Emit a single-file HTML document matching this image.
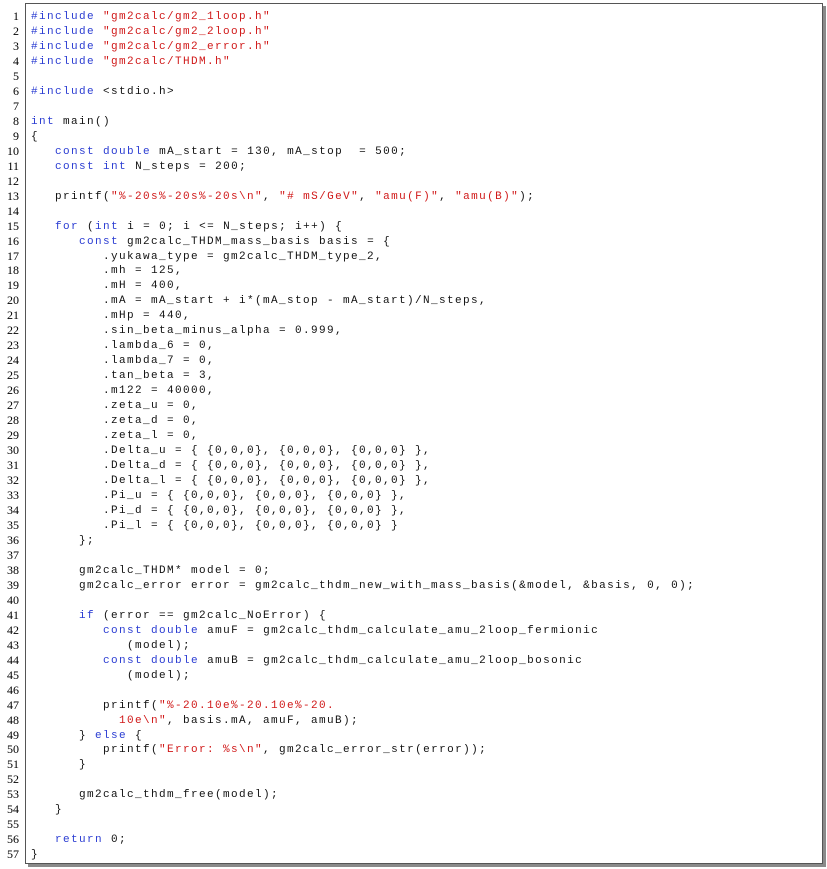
<!DOCTYPE html>
<html><head><meta charset="utf-8"><style>
html,body{margin:0;padding:0;background:#fff;width:827px;height:869px;overflow:hidden}
.box{position:absolute;left:25px;top:3px;width:796px;height:859px;border:1px solid #555;background:#fff;box-shadow:3px 3px 0 #8a8a8a}
.nums{position:absolute;left:0;top:9px;width:19px;text-align:right;font-family:"Liberation Serif",serif;font-size:12px;color:#000}
.nums div,.code div{height:14.97px;line-height:14.97px}
.code{position:absolute;left:31px;top:10px;font-family:"Liberation Mono",monospace;font-size:11px;letter-spacing:1.4px;color:#111}
.code div{white-space:pre}
.k{color:#2a3cd2}.s{color:#d01818}
</style></head><body>
<div class="box"></div>
<div class="nums">
<div>1</div><div>2</div><div>3</div><div>4</div><div>5</div><div>6</div><div>7</div><div>8</div><div>9</div><div>10</div><div>11</div><div>12</div><div>13</div><div>14</div><div>15</div><div>16</div><div>17</div><div>18</div><div>19</div><div>20</div><div>21</div><div>22</div><div>23</div><div>24</div><div>25</div><div>26</div><div>27</div><div>28</div><div>29</div><div>30</div><div>31</div><div>32</div><div>33</div><div>34</div><div>35</div><div>36</div><div>37</div><div>38</div><div>39</div><div>40</div><div>41</div><div>42</div><div>43</div><div>44</div><div>45</div><div>46</div><div>47</div><div>48</div><div>49</div><div>50</div><div>51</div><div>52</div><div>53</div><div>54</div><div>55</div><div>56</div><div>57</div>
</div>
<div class="code">
<div><span class="k">#include</span> <span class="s">"gm2calc/gm2_1loop.h"</span></div>
<div><span class="k">#include</span> <span class="s">"gm2calc/gm2_2loop.h"</span></div>
<div><span class="k">#include</span> <span class="s">"gm2calc/gm2_error.h"</span></div>
<div><span class="k">#include</span> <span class="s">"gm2calc/THDM.h"</span></div>
<div> </div>
<div><span class="k">#include</span> &lt;stdio.h&gt;</div>
<div> </div>
<div><span class="k">int</span> main()</div>
<div>{</div>
<div>   <span class="k">const</span> <span class="k">double</span> mA_start = 130, mA_stop  = 500;</div>
<div>   <span class="k">const</span> <span class="k">int</span> N_steps = 200;</div>
<div> </div>
<div>   printf(<span class="s">"%-20s%-20s%-20s\n"</span>, <span class="s">"# mS/GeV"</span>, <span class="s">"amu(F)"</span>, <span class="s">"amu(B)"</span>);</div>
<div> </div>
<div>   <span class="k">for</span> (<span class="k">int</span> i = 0; i &lt;= N_steps; i++) {</div>
<div>      <span class="k">const</span> gm2calc_THDM_mass_basis basis = {</div>
<div>         .yukawa_type = gm2calc_THDM_type_2,</div>
<div>         .mh = 125,</div>
<div>         .mH = 400,</div>
<div>         .mA = mA_start + i*(mA_stop - mA_start)/N_steps,</div>
<div>         .mHp = 440,</div>
<div>         .sin_beta_minus_alpha = 0.999,</div>
<div>         .lambda_6 = 0,</div>
<div>         .lambda_7 = 0,</div>
<div>         .tan_beta = 3,</div>
<div>         .m122 = 40000,</div>
<div>         .zeta_u = 0,</div>
<div>         .zeta_d = 0,</div>
<div>         .zeta_l = 0,</div>
<div>         .Delta_u = { {0,0,0}, {0,0,0}, {0,0,0} },</div>
<div>         .Delta_d = { {0,0,0}, {0,0,0}, {0,0,0} },</div>
<div>         .Delta_l = { {0,0,0}, {0,0,0}, {0,0,0} },</div>
<div>         .Pi_u = { {0,0,0}, {0,0,0}, {0,0,0} },</div>
<div>         .Pi_d = { {0,0,0}, {0,0,0}, {0,0,0} },</div>
<div>         .Pi_l = { {0,0,0}, {0,0,0}, {0,0,0} }</div>
<div>      };</div>
<div> </div>
<div>      gm2calc_THDM* model = 0;</div>
<div>      gm2calc_error error = gm2calc_thdm_new_with_mass_basis(&amp;model, &amp;basis, 0, 0);</div>
<div> </div>
<div>      <span class="k">if</span> (error == gm2calc_NoError) {</div>
<div>         <span class="k">const</span> <span class="k">double</span> amuF = gm2calc_thdm_calculate_amu_2loop_fermionic</div>
<div>            (model);</div>
<div>         <span class="k">const</span> <span class="k">double</span> amuB = gm2calc_thdm_calculate_amu_2loop_bosonic</div>
<div>            (model);</div>
<div> </div>
<div>         printf(<span class="s">"%-20.10e%-20.10e%-20.</span></div>
<div>           <span class="s">10e\n"</span>, basis.mA, amuF, amuB);</div>
<div>      } <span class="k">else</span> {</div>
<div>         printf(<span class="s">"Error: %s\n"</span>, gm2calc_error_str(error));</div>
<div>      }</div>
<div> </div>
<div>      gm2calc_thdm_free(model);</div>
<div>   }</div>
<div> </div>
<div>   <span class="k">return</span> 0;</div>
<div>}</div>
</div>
</body></html>
